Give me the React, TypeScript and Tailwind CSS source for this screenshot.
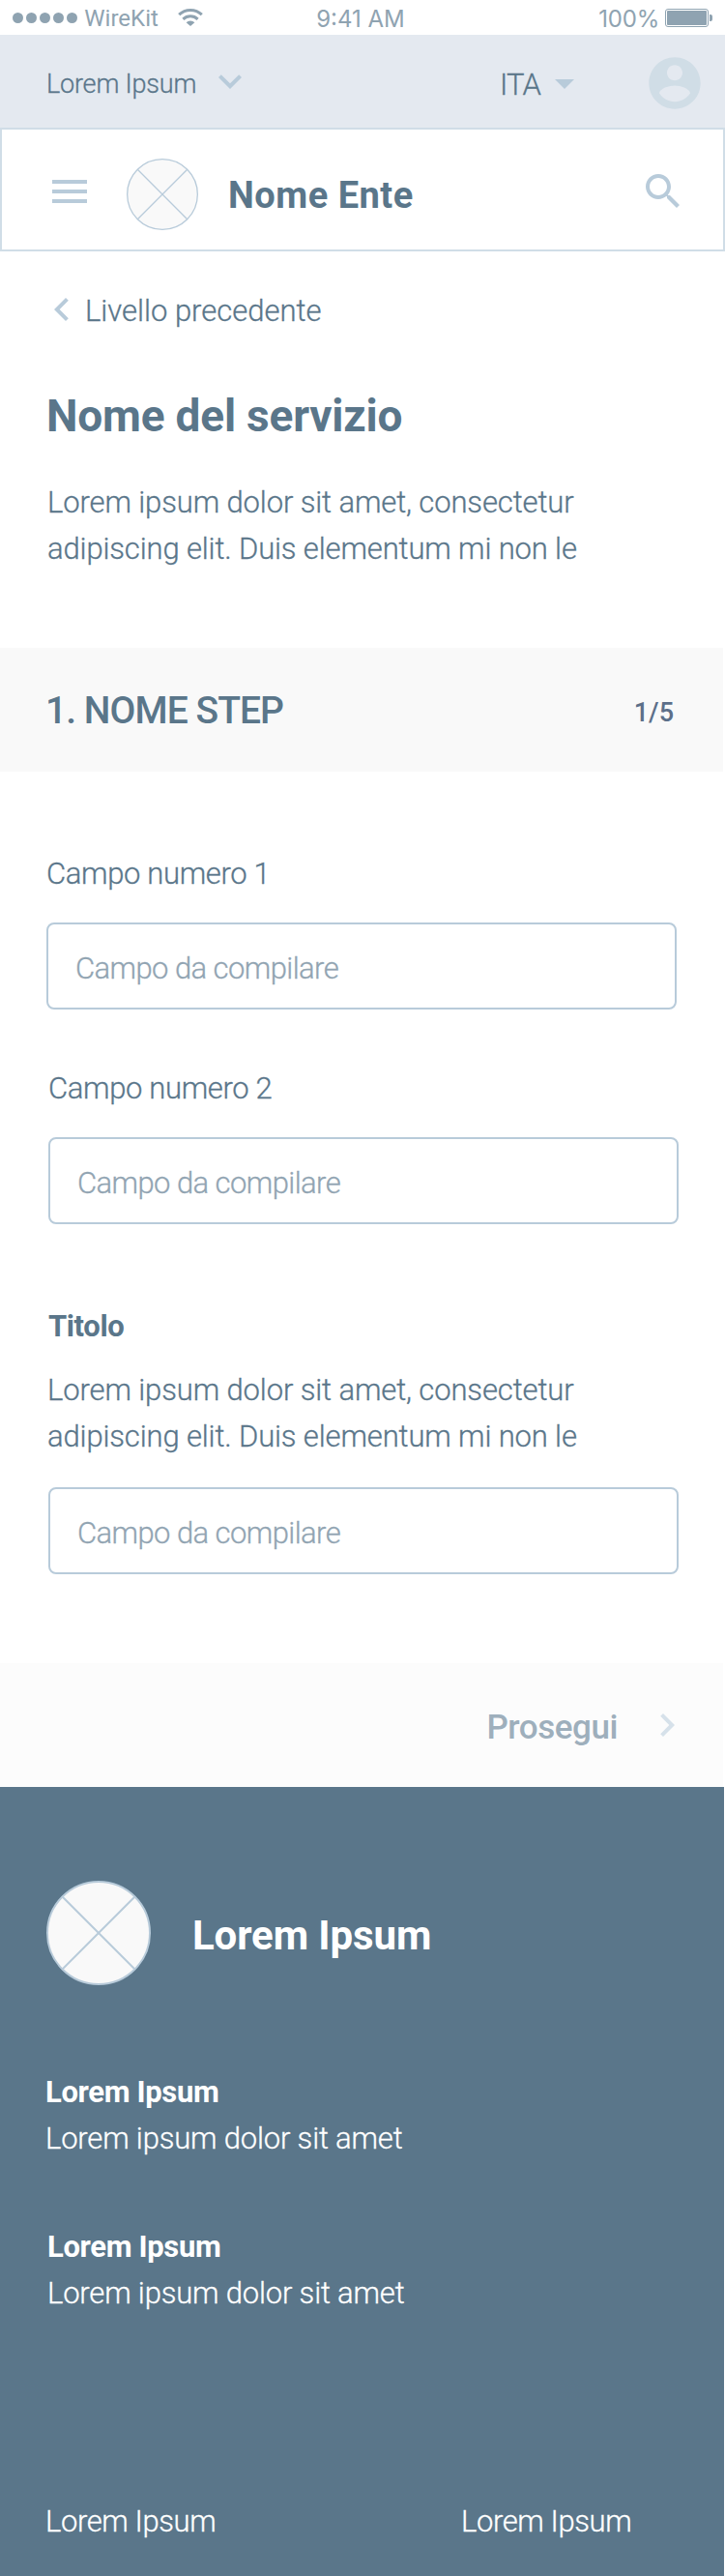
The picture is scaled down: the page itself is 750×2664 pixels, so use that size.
import type { ReactNode } from "react";

const PATHS = {
  expandMore: "M16.59 8.59 12 13.17 7.41 8.59 6 10l6 6 6-6z",
  dropDown: "M7 10l5 5 5-5z",
  account:
    "M12 2C6.48 2 2 6.48 2 12s4.48 10 10 10 10-4.48 10-10S17.52 2 12 2zm0 3c1.66 0 3 1.34 3 3s-1.34 3-3 3-3-1.34-3-3 1.34-3 3-3zm0 14.2c-2.5 0-4.71-1.28-6-3.22.03-1.99 4-3.08 6-3.08 1.99 0 5.97 1.09 6 3.08-1.29 1.94-3.5 3.22-6 3.22z",
  menu: "M3 18h18v-2H3v2zm0-5h18v-2H3v2zm0-7v2h18V6H3z",
  search:
    "M15.5 14h-.79l-.28-.27C15.41 12.59 16 11.11 16 9.5 16 5.91 13.09 3 9.5 3S3 5.91 3 9.5 5.91 16 9.5 16c1.61 0 3.09-.59 4.23-1.57l.27.28v.79l5 4.99L20.49 19l-4.99-5zm-6 0C7.01 14 5 11.99 5 9.5S7.01 5 9.5 5 14 7.01 14 9.5 11.99 14 9.5 14z",
  chevronLeft: "M15.41 7.41 14 6l-6 6 6 6 1.41-1.41L10.83 12z",
  chevronRight: "M10 6 8.59 7.41 13.17 12l-4.58 4.59L10 18l6-6z",
};

function Icon({ name, className }: { name: keyof typeof PATHS; className: string }) {
  return (
    <svg viewBox="0 0 24 24" fill="currentColor" className={`shrink-0 ${className}`}>
      <path d={PATHS[name]} />
    </svg>
  );
}

function LogoPlaceholder({ size, stroke, className }: { size: number; stroke: number; className: string }) {
  const c = size / 2;
  const r = c - stroke / 2;
  const d = r * Math.SQRT1_2;
  return (
    <svg viewBox={`0 0 ${size} ${size}`} className={`shrink-0 ${className}`} fill="none" stroke="#b8cbda" strokeWidth={stroke}>
      <circle cx={c} cy={c} r={r} fill="#f9f9f9" />
      <path d={`M${c - d} ${c - d}L${c + d} ${c + d}M${c + d} ${c - d}L${c - d} ${c + d}`} />
    </svg>
  );
}

const LIGHT = "font-light [-webkit-text-stroke:0.3px_currentColor]";

function StatusBar() {
  return (
    <div className="flex h-9 justify-between pl-[13px] pr-[13px] text-[24px] leading-9 text-[#8fa3b1]">
      <div className="flex w-[312px]">
        <div className="flex gap-[2.6px] pt-[13px]">
          {[0, 1, 2, 3, 4].map((i) => (
            <span key={i} className="size-[11.4px] rounded-full bg-[#8fa3b1]" />
          ))}
        </div>
        <span className="ml-[7px] pt-[1px]">WireKit</span>
        <svg viewBox="0 0 26 19" className="ml-[20px] mt-[8px] h-[19px] w-[26px]" fill="none" stroke="currentColor" strokeWidth="3">
          <path d="M1.2 7.2a17 17 0 0 1 23.6 0" />
          <path d="M5.4 11.9a11 11 0 0 1 15.2 0" />
          <path d="M8.6 15.2a6.4 6.4 0 0 1 8.8 0L13 19z" fill="currentColor" stroke="none" />
        </svg>
      </div>
      <span className="-ml-[2px] pt-[2px] font-['Inter']">9:41 AM</span>
      <div className="flex w-[314px] justify-end font-['Inter']">
        <span className="pt-[2px] tracking-[-0.2px]">100%</span>
        <svg viewBox="0 0 49 19" className="ml-[6px] mt-[9px] h-[19px] w-[49px]" fill="none">
          <rect x="0.5" y="0.5" width="44" height="18" rx="2.5" stroke="#8fa3b1" />
          <rect x="2" y="2" width="41" height="15" rx="1" fill="#8fa3b1" />
          <path d="M46 6h1a2 2 0 0 1 2 2v3a2 2 0 0 1-2 2h-1z" fill="#8fa3b1" />
        </svg>
      </div>
    </div>
  );
}

function TopBar() {
  return (
    <div className="flex h-24 items-center bg-[#e4e9f0]">
      <span className={`ml-[48px] w-[157px] pt-[6px] text-[27px] leading-9 tracking-[-0.2px] ${LIGHT}`}>Lorem Ipsum</span>
      <Icon name="expandMore" className="ml-[9px] size-12 text-[#b8cbda]" />
      <span className={`ml-auto w-[43px] pt-[7px] text-[31px] leading-9 tracking-[-0.8px] ${LIGHT}`}>ITA</span>
      <Icon name="dropDown" className="mt-[4px] size-12 text-[#b8cbda]" />
      <Icon name="account" className="ml-[58px] mr-[20px] mt-[4px] size-16 text-[#d0dde6]" />
    </div>
  );
}

function Header() {
  return (
    <header className="flex h-32 items-center border-2 border-[#d0dde7]">
      <Icon name="menu" className="ml-[46px] mt-[4px] size-12 text-[#b8cbda]" />
      <LogoPlaceholder size={74} stroke={1.3} className="ml-[35px] mt-[9px] size-[74px]" />
      <span className="ml-[31px] pt-[12px] text-[38px] font-bold leading-[48px] tracking-[0.5px]">Nome Ente</span>
      <Icon name="search" className="ml-auto mr-[38px] mt-[4px] size-12 text-[#b8cbda]" />
    </header>
  );
}

function Field({ placeholder }: { placeholder: string }) {
  return (
    <div className="flex h-[90px] w-[652px] items-center rounded-[8px] border-2 border-[#b8cbda] pl-[28px]">
      <span className={`pt-[5px] text-[31px] leading-[48px] tracking-[-0.58px] text-[#91a4b2] ${LIGHT}`}>{placeholder}</span>
    </div>
  );
}

function Body() {
  return (
    <p className={`text-[31px] leading-[48px] ${LIGHT}`}>
      <span className="block tracking-[-0.12px]">Lorem ipsum dolor sit amet, consectetur</span>
      <span className="block tracking-[-0.14px]">adipiscing elit. Duis elementum mi non le</span>
    </p>
  );
}

function FooterBlock({ children, title }: { children: ReactNode; title: string }) {
  return (
    <div className="text-[31px] leading-[48px]">
      <div className="font-bold tracking-[-0.35px]">{title}</div>
      <div className={`tracking-[-0.18px] ${LIGHT}`}>{children}</div>
    </div>
  );
}

export default function App() {
  return (
    <div className="flex h-[2664px] w-[750px] flex-col bg-white font-['Roboto',sans-serif] text-[#5a768a]">
      <StatusBar />
      <TopBar />
      <Header />
      <main className="h-[1460px]">
        <section className="h-[410px] pt-[36px]">
          <div className="flex h-[48px] items-center pl-[40px]">
            <Icon name="chevronLeft" className="size-12 text-[#b8cbda]" />
            <span className={`pt-[4px] text-[31px] leading-[48px] ${LIGHT}`}>Livello precedente</span>
          </div>
          <h1 className="mt-[58px] pl-[48px] text-[46px] font-bold leading-[56px] tracking-[-0.2px]">Nome del servizio</h1>
          <div className="mt-[38px] pl-[49px]">
            <Body />
          </div>
        </section>
        <section className="flex h-32 w-[748px] items-center justify-between bg-[#f9f9f9] pl-[47px] pr-[51px]">
          <h2 className="pt-[2px] text-[39px] font-medium leading-[48px] tracking-[-0.95px]">1. NOME STEP</h2>
          <span className="pt-[6px] text-[27px] font-medium leading-[36px] text-[#5c6f89]">1/5</span>
        </section>
        <section className="pt-[82px]">
          <div className="pl-[48px]">
            <div className={`text-[31px] leading-[48px] tracking-[-0.35px] ${LIGHT}`}>Campo numero 1</div>
            <div className="mt-[26px]">
              <Field placeholder="Campo da compilare" />
            </div>
          </div>
          <div className="mt-[58px] pl-[50px]">
            <div className={`text-[31px] leading-[48px] tracking-[-0.35px] ${LIGHT}`}>Campo numero 2</div>
            <div className="mt-[26px]">
              <Field placeholder="Campo da compilare" />
            </div>
            <h3 className="mt-[82px] text-[31px] font-bold leading-[48px] tracking-[-0.4px]">Titolo</h3>
            <div className="-ml-[1px] mt-[18px]">
              <Body />
            </div>
            <div className="mt-[28px]">
              <Field placeholder="Campo da compilare" />
            </div>
          </div>
        </section>
      </main>
      <div className="flex h-32 w-[748px] items-center justify-end bg-[#fcfcfc] pr-[34px] text-[#9eafbc]">
        <span className="pt-[5px] text-[35px] font-medium leading-[48px] tracking-[-0.45px]">Prosegui</span>
        <Icon name="chevronRight" className="ml-[27px] size-12 text-[#d6e1ea]" />
      </div>
      <footer className="flex w-[749px] flex-1 flex-col bg-[#5a768a] text-white">
        <div className="mt-[97px] flex h-[108px] items-center pl-[48px]">
          <LogoPlaceholder size={108} stroke={2} className="size-[108px]" />
          <span className="ml-[43px] pt-[6px] text-[42px] font-bold leading-[48px] tracking-[-0.1px]">Lorem Ipsum</span>
        </div>
        <div className="mt-[87px] pl-[47px]">
          <FooterBlock title="Lorem Ipsum">Lorem ipsum dolor sit amet</FooterBlock>
        </div>
        <div className="mt-[64px] pl-[49px]">
          <FooterBlock title="Lorem Ipsum">Lorem ipsum dolor sit amet</FooterBlock>
        </div>
        <div className={`mt-[188px] flex pl-[47px] text-[31px] leading-[48px] tracking-[-0.4px] ${LIGHT}`}>
          <span className="w-[430px]">Lorem Ipsum</span>
          <span>Lorem Ipsum</span>
        </div>
      </footer>
    </div>
  );
}
